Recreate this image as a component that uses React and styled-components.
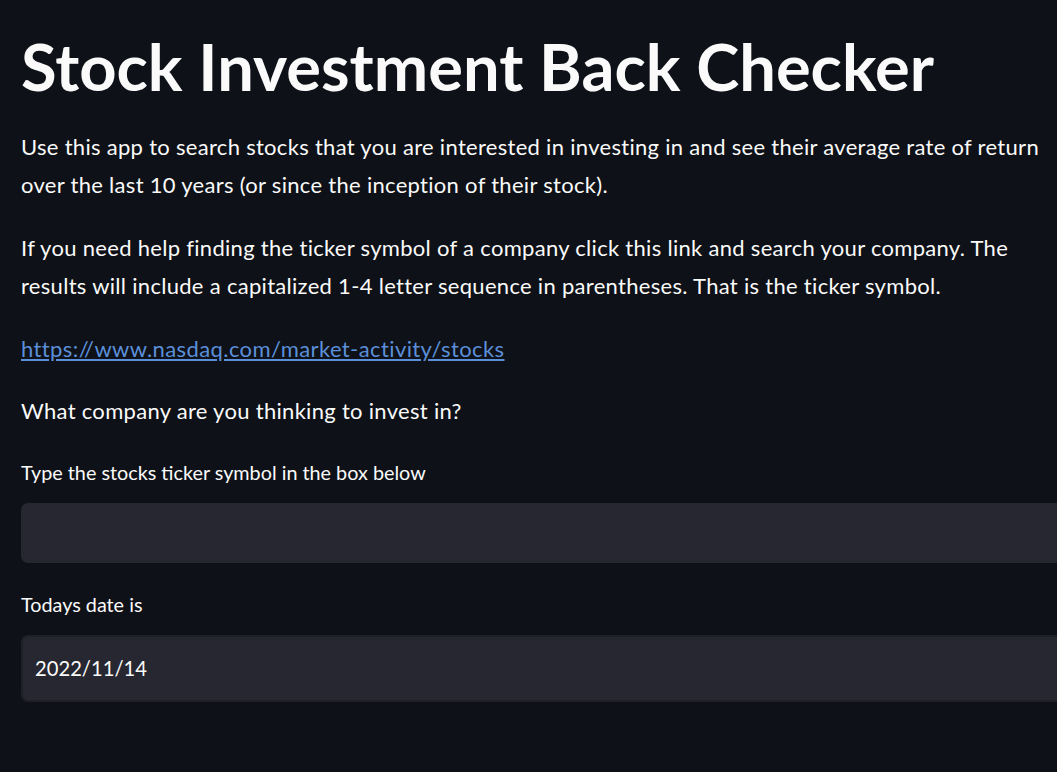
import React from "react";
import styled, { createGlobalStyle } from "styled-components";

const Global = createGlobalStyle`
  html, body { margin: 0; padding: 0; background: #0e1117; overflow: hidden; }
  body { width: 1057px; height: 772px; }
`;

const Main = styled.main`
  padding: 26px 0 0 21px;
  width: 1140px;
  color: #fafafa;
  font-family: Lato, "Source Sans Pro", sans-serif;
`;

const Title = styled.h1`
  margin: 0 0 21.5px;
  font-size: 65px;
  line-height: 80px;
  font-weight: 700;
`;

const Para = styled.p`
  margin: 0 0 24px;
  font-size: 22px;
  line-height: 38.5px;
  letter-spacing: 0.3px;
  white-space: nowrap;
`;

const Link = styled.a`
  color: #5b8fd9;
  text-decoration: underline;
  letter-spacing: 0.4px;
`;

const Label = styled.label`
  display: block;
  margin: ${(p) => p.$top || 0}px 0 16px;
  font-family: Lato, sans-serif;
  font-size: 19.8px;
  line-height: 30px;
  color: #fafafa;
`;

const Field = styled.div`
  box-sizing: border-box;
  height: ${(p) => p.$h}px;
  width: 1100px;
  background: #262730;
  border-radius: 7px;
  border: ${(p) => (p.$bordered ? "2px solid #1f2027" : "none")};
  display: flex;
  align-items: center;
  padding-left: 12px;
  font-family: Lato, sans-serif;
  font-size: 20.2px;
  color: #fafafa;
`;

export default function App() {
  return (
    <>
      <Global />
      <Main>
        <Title>Stock Investment Back Checker</Title>
        <Para>
          Use this app to search stocks that you are interested in investing in and see their average rate of return
          <br />
          over the last 10 years (or since the inception of their stock).
        </Para>
        <Para>
          If you need help finding the ticker symbol of a company click this link and search your company. The
          <br />
          results will include a capitalized 1-4 letter sequence in parentheses. That is the ticker symbol.
        </Para>
        <Para>
          <Link href="#">https://www.nasdaq.com/market-activity/stocks</Link>
        </Para>
        <Para>What company are you thinking to invest in?</Para>
        <Label $top={26}>Type the stocks ticker symbol in the box below</Label>
        <Field $h={60} />
        <Label $top={26}>Todays date is</Label>
        <Field $h={67} $bordered>2022/11/14</Field>
      </Main>
    </>
  );
}
